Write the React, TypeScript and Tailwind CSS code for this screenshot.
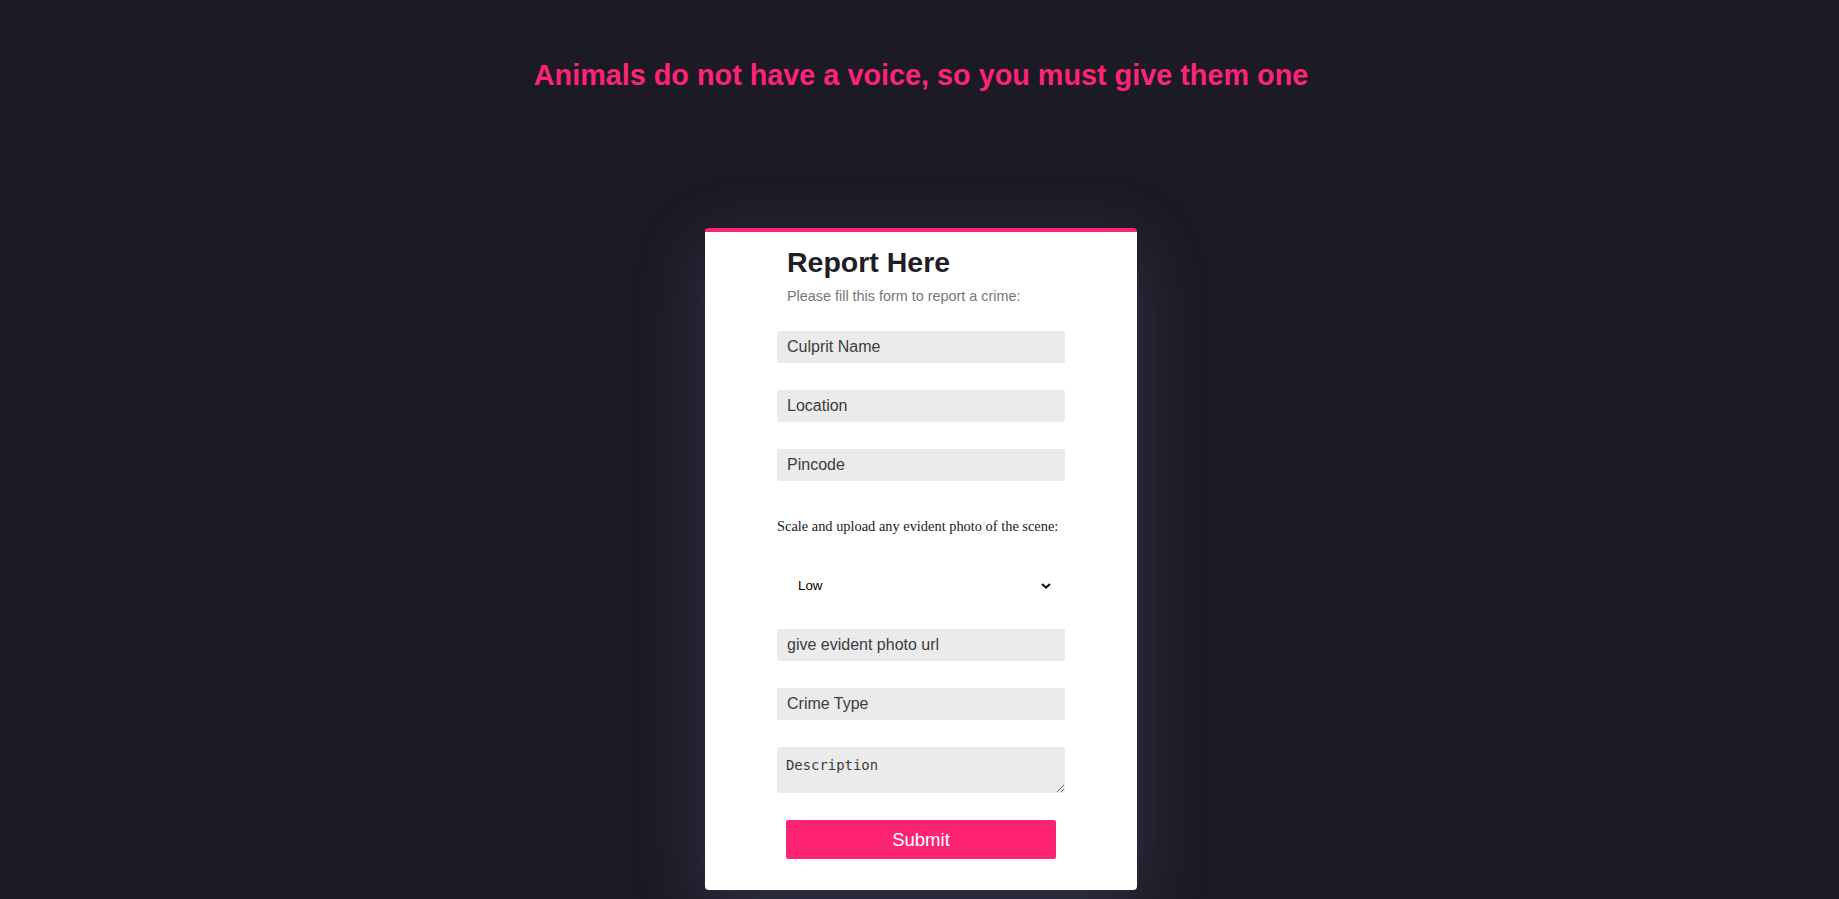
import React from "react";

const inputCls =
  "block w-[288px] h-[32px] bg-[#ebebeb] rounded-[2px] pl-[10px] pr-[10px] text-[16px] text-[#333] placeholder:text-[#3c3c3c] outline-none border-0";

export default function App() {
  return (
    <div
      className="min-h-screen w-full bg-[#1c1a24] flex flex-col items-center pl-[3px] pb-[11px]"
      style={{ fontFamily: '"Liberation Sans", Arial, sans-serif' }}
    >
      <h1 className="mt-[59px] text-[28.8px] leading-[33px] font-bold text-[#fd2474] text-center">
        Animals do not have a voice, so you must give them one
      </h1>

      <div className="mt-[136px] w-[432px] bg-white rounded-[4px] border-t-[4px] border-[#fd2474] shadow-[0_18px_70px_rgba(95,105,150,0.32)] flex flex-col items-center pb-[31px]">
        <div className="w-[288px] flex flex-col">
          <h2 className="mt-[14px] pl-[10px] text-[28.5px] leading-[33px] font-bold text-[#1f1d26]">
            Report Here
          </h2>
          <p className="mt-[9px] pl-[10px] text-[14.4px] leading-[17px] text-[#777]">
            Please fill this form to report a crime:
          </p>

          <input className={inputCls + " mt-[26px]"} placeholder="Culprit Name" />
          <input className={inputCls + " mt-[27px]"} placeholder="Location" />
          <input className={inputCls + " mt-[27px]"} placeholder="Pincode" />

          <label
            className="mt-[37px] text-[14.4px] leading-[17px] text-[#222]"
            style={{ fontFamily: '"Liberation Serif", "Times New Roman", serif' }}
          >
            Scale and upload any evident photo of the scene:
          </label>

          <div className="relative mt-[36px] w-[288px] h-[30px]">
            <select
              className="appearance-none w-full h-full bg-white border-0 outline-none pl-[21px] text-[13.3px] text-black"
              defaultValue="Low"
            >
              <option>Low</option>
              <option>Medium</option>
              <option>High</option>
            </select>
            <svg
              className="absolute right-[14px] top-[12px] pointer-events-none"
              width="10"
              height="6"
              viewBox="0 0 10 6"
            >
              <path d="M1 1 L5 4.6 L9 1" fill="none" stroke="#111" strokeWidth="2" />
            </svg>
          </div>

          <input className={inputCls + " mt-[28px]"} placeholder="give evident photo url" />
          <input className={inputCls + " mt-[27px]"} placeholder="Crime Type" />
          <textarea
            className="block mt-[27px] w-[288px] h-[46px] bg-[#ebebeb] rounded-[2px] pl-[9px] pt-[10px] text-[13.9px] leading-[17px] text-[#333] placeholder:text-[#3c3c3c] outline-none border-0"
            style={{ fontFamily: '"DejaVu Sans Mono", "Liberation Mono", monospace' }}
            placeholder="Description"
          />

          <button className="mt-[27px] self-center w-[270px] h-[39px] bg-[#fd2474] text-white text-[18.5px] rounded-[2px]">
            Submit
          </button>
        </div>
      </div>
    </div>
  );
}
